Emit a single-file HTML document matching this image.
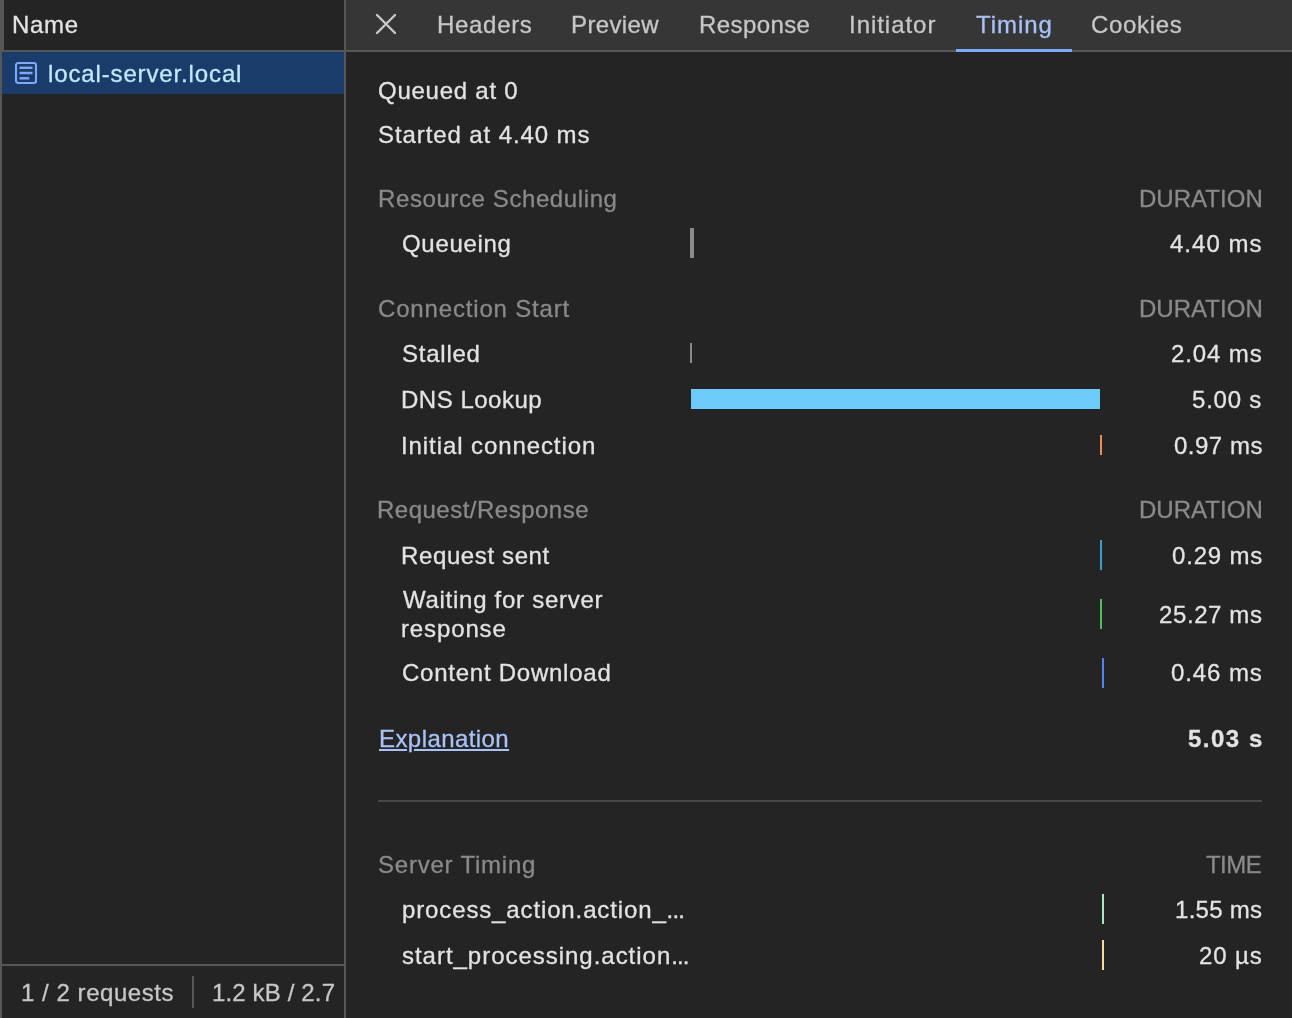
<!DOCTYPE html>
<html><head><meta charset="utf-8">
<style>
html,body{margin:0;padding:0;width:1292px;height:1018px;overflow:hidden;background:#242424;}
body{position:relative;font-family:"Liberation Sans",sans-serif;font-size:24px;color:#e3e3e3;}
.a{position:absolute;}
.t{position:absolute;white-space:nowrap;line-height:30px;height:30px;will-change:transform;-webkit-text-stroke:0.3px currentColor;}
.r{text-align:right;}
.sec{color:#8a8a8a;}
.tab{color:#c7c7c7;}
</style></head><body>
<!-- left panel -->
<div class="a" style="left:0;top:0;width:344px;height:1018px;background:#242424"></div>
<div class="a" style="left:0;top:0;width:2px;height:1018px;background:#575757"></div>
<div class="a" style="left:2px;top:0;width:2px;height:50px;background:#575757"></div>
<div class="a" style="left:0;top:50px;width:344px;height:2px;background:#575757"></div>
<div class="a" style="left:2px;top:52px;width:342px;height:42px;background:#1a3c6a"></div>
<svg class="a" style="left:14px;top:61px" width="24" height="24" viewBox="0 0 24 24">
<rect x="2" y="2" width="20" height="20" rx="2.2" fill="none" stroke="#80a8f8" stroke-width="2.1"/>
<rect x="5.5" y="5.6" width="13" height="2.4" fill="#80a8f8"/>
<rect x="5.5" y="10.8" width="13" height="2.4" fill="#80a8f8"/>
<rect x="5.5" y="16.1" width="9.8" height="2.4" fill="#80a8f8"/>
</svg>
<div class="a" style="left:2px;top:964px;width:342px;height:2px;background:#575757"></div>
<div class="a" style="left:192px;top:976px;width:2px;height:32px;background:#575757"></div>
<!-- divider -->
<div class="a" style="left:344px;top:0;width:2px;height:1018px;background:#575757"></div>
<!-- tab bar -->
<div class="a" style="left:346px;top:0;width:946px;height:50px;background:#363636"></div>
<div class="a" style="left:346px;top:50px;width:946px;height:2px;background:#575757"></div>
<svg class="a" style="left:374px;top:12px" width="24" height="24" viewBox="0 0 24 24">
<path d="M3 3L21 21M21 3L3 21" stroke="#c7c7c7" stroke-width="2.4" stroke-linecap="round"/>
</svg>
<div class="a" style="left:956px;top:49px;width:116px;height:3px;background:#7cacf8"></div>
<!-- content -->

<div class="a" style="left:690px;top:228px;width:4px;height:30px;background:#8a8a8a"></div>

<div class="a" style="left:690px;top:343px;width:2px;height:20px;background:#8a8a8a"></div>
<div class="a" style="left:691px;top:389px;width:409px;height:20px;background:#6ccbf8"></div>
<div class="a" style="left:1100px;top:435px;width:2px;height:20px;background:#f28b50"></div>

<div class="a" style="left:1100px;top:540px;width:2px;height:30px;background:#3b9ecf"></div>
<div class="a" style="left:1100px;top:599px;width:2px;height:30px;background:#4dc05b"></div>
<div class="a" style="left:1102px;top:658px;width:2px;height:30px;background:#5383ef"></div>

<div class="a" style="left:378px;top:800px;width:884px;height:2px;background:#474747"></div>

<div class="a" style="left:1102px;top:894px;width:2px;height:30px;background:#a8e6c2"></div>
<div class="a" style="left:1102px;top:940px;width:2px;height:30px;background:#f6dca2"></div>
<div class="t" id="name" style="left:11.70px;top:10px;letter-spacing:0.669px;color:#e3e3e3">Name</div>
<div class="t" id="local" style="left:48.10px;top:59px;letter-spacing:0.864px;color:#c2e7ff">local-server.local</div>
<div class="t" id="f1" style="left:20.50px;top:978px;letter-spacing:0.539px;color:#c7c7c7">1 / 2 requests</div>
<div class="t" id="f2" style="left:211.50px;top:978px;letter-spacing:0.145px;color:#c7c7c7">1.2 kB / 2.7</div>
<div class="t" id="headers" style="left:437.41px;top:10px;letter-spacing:0.692px;color:#c7c7c7">Headers</div>
<div class="t" id="preview" style="left:571.15px;top:10px;letter-spacing:0.376px;color:#c7c7c7">Preview</div>
<div class="t" id="response_t" style="left:698.67px;top:10px;letter-spacing:0.401px;color:#c7c7c7">Response</div>
<div class="t" id="initiator" style="left:849.08px;top:10px;letter-spacing:0.961px;color:#c7c7c7">Initiator</div>
<div class="t" id="timing" style="left:975.76px;top:10px;letter-spacing:0.953px;color:#a9c2f8">Timing</div>
<div class="t" id="cookies" style="left:1091.19px;top:10px;letter-spacing:0.671px;color:#c7c7c7">Cookies</div>
<div class="t" id="queued" style="left:377.70px;top:76px;letter-spacing:0.752px;">Queued at 0</div>
<div class="t" id="started" style="left:377.73px;top:120px;letter-spacing:0.906px;">Started at 4.40 ms</div>
<div class="t" id="rs" style="left:377.51px;top:184px;letter-spacing:0.599px;color:#8a8a8a">Resource Scheduling</div>
<div class="t" id="d1" style="right:29.39px;top:184px;letter-spacing:0.028px;color:#8a8a8a">DURATION</div>
<div class="t" id="queueing" style="left:402.00px;top:229px;letter-spacing:0.680px;">Queueing</div>
<div class="t" id="v1" style="right:29.25px;top:229px;letter-spacing:1.008px;">4.40 ms</div>
<div class="t" id="cs" style="left:377.96px;top:294px;letter-spacing:0.834px;color:#8a8a8a">Connection Start</div>
<div class="t" id="d2" style="right:29.39px;top:294px;letter-spacing:0.028px;color:#8a8a8a">DURATION</div>
<div class="t" id="stalled" style="left:401.93px;top:339px;letter-spacing:0.762px;">Stalled</div>
<div class="t" id="v2" style="right:29.08px;top:339px;letter-spacing:0.886px;">2.04 ms</div>
<div class="t" id="dns" style="left:401.20px;top:385px;letter-spacing:0.514px;">DNS Lookup</div>
<div class="t" id="v3" style="right:29.45px;top:385px;letter-spacing:0.789px;">5.00 s</div>
<div class="t" id="initial" style="left:401.10px;top:431px;letter-spacing:0.912px;">Initial connection</div>
<div class="t" id="v4" style="right:29.50px;top:431px;letter-spacing:0.502px;">0.97 ms</div>
<div class="t" id="rr" style="left:376.71px;top:495px;letter-spacing:0.494px;color:#8a8a8a">Request/Response</div>
<div class="t" id="d3" style="right:29.39px;top:495px;letter-spacing:0.028px;color:#8a8a8a">DURATION</div>
<div class="t" id="reqsent" style="left:401.20px;top:541px;letter-spacing:0.621px;">Request sent</div>
<div class="t" id="v5" style="right:29.35px;top:541px;letter-spacing:0.810px;">0.29 ms</div>
<div class="t" id="waiting" style="left:402.69px;top:585px;letter-spacing:0.725px;">Waiting for server</div>
<div class="t" id="response" style="left:401.43px;top:614px;letter-spacing:0.870px;">response</div>
<div class="t" id="v6" style="right:29.44px;top:600px;letter-spacing:0.594px;">25.27 ms</div>
<div class="t" id="content" style="left:402.00px;top:658px;letter-spacing:0.752px;">Content Download</div>
<div class="t" id="v7" style="right:29.77px;top:658px;letter-spacing:0.905px;">0.46 ms</div>
<div class="t" id="expl" style="left:378.70px;top:724px;letter-spacing:0.425px;color:#a9c2f8;text-decoration:underline">Explanation</div>
<div class="t" id="v8" style="right:28.20px;top:724px;letter-spacing:1.501px;font-weight:bold">5.03 s</div>
<div class="t" id="st" style="left:377.68px;top:850px;letter-spacing:0.782px;color:#8a8a8a">Server Timing</div>
<div class="t" id="time" style="right:31.08px;top:850px;letter-spacing:-0.559px;color:#8a8a8a">TIME</div>
<div class="t" id="pa" style="left:401.84px;top:895px;letter-spacing:0.869px;">process_action.action_<span style='letter-spacing:-0.9px'>...</span></div>
<div class="t" id="v9" style="right:30.03px;top:895px;letter-spacing:0.290px;">1.55 ms</div>
<div class="t" id="sp" style="left:402.10px;top:941px;letter-spacing:0.974px;">start_processing.action<span style='letter-spacing:-0.9px'>...</span></div>
<div class="t" id="v10" style="right:29.13px;top:941px;letter-spacing:0.892px;">20 µs</div>
</body></html>
